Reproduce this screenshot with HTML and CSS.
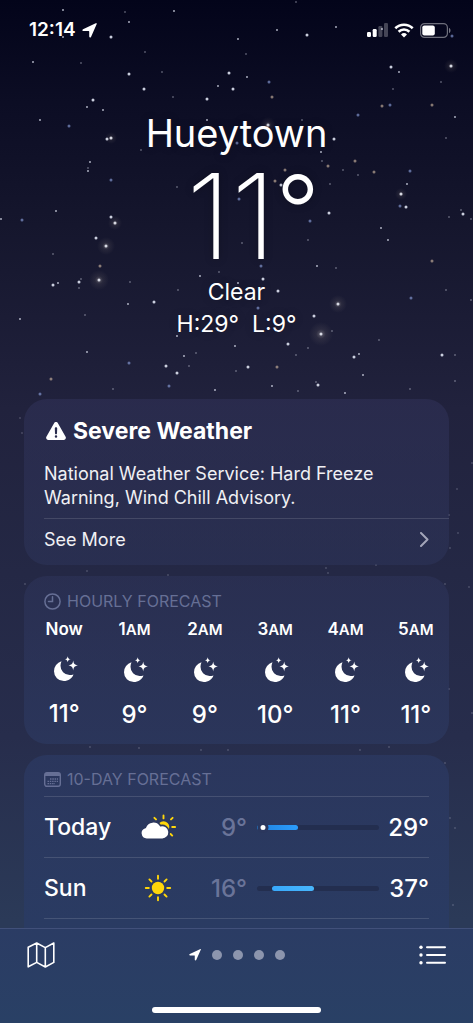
FILE: index.html
```html
<!DOCTYPE html>
<html lang="en">
<head>
<meta charset="utf-8">
<meta name="viewport" content="width=device-width, initial-scale=1">
<title>Weather</title>
<link rel="stylesheet" href="styles.css">
</head>
<body>
<svg class="symbols" aria-hidden="true">
  <symbol id="arrow" viewBox="0 0 16 16"><path d="M15.700 1 9.600 14.800c-.5 1-1.900.8-1.900-.4V9.200c0-.4-.2-.6-.6-.6H1.500C.2 8.600 0 7.200 1.100 6.700L14.600.3c.9-.4 1.400 0 1.100.7z"/></symbol>
  <symbol id="moon" viewBox="0 0 26 26">
    <path d="M8.500 5.200A10.200 10.200 0 0 0 1 15.200a9.800 9.800 0 0 0 9.800 9.800c4.500 0 8.200-2.700 9.700-6.600-1.300.5-2.600.7-4 .7A9.200 9.200 0 0 1 7.500 9.800c0-1.600.4-3.200 1-4.600z"/>
    <path d="M14.700.3c.4 2.100 1 2.600 3 3-2 .4-2.600 1-3 3-.4-2-1-2.600-3-3 2-.4 2.600-.9 3-3zM20.200 4.600c.6 3.500 1.400 4.300 4.800 4.900-3.400.6-4.200 1.400-4.800 4.900-.6-3.500-1.400-4.300-4.800-4.900 3.400-.6 4.200-1.400 4.800-4.900z"/>
  </symbol>
</svg>
<div class="app">
  <svg class="sky" width="473" height="928" aria-hidden="true">
    <defs>
      <radialGradient id="glow"><stop offset="0" stop-color="#fff" stop-opacity=".3"/><stop offset=".4" stop-color="#ffe9c8" stop-opacity=".07"/><stop offset="1" stop-color="#ffe9c8" stop-opacity="0"/></radialGradient>
    </defs>
    <path class="star star-small" d="M125 12h0M145 52h0M81 63h0M162 72h0M173 97h0M246 54h0M296 2h0M393 89h0M441 82h0M141 150h0M88 168h0M53 254h0M81 279h0M79 288h0M130 282h0M85 315h0M113 389h0M196 353h0M189 366h0M178 290h0M177 187h0M219 272h0M236 371h0M446 138h0M302 120h0M322 161h0M343 170h0M358 175h0M330 184h0M461 210h0M449 217h0M471 219h0M308 240h0M242 243h0M336 268h0M332 331h0M446 290h0M471 300h0M379 340h0M308 348h0M296 355h0M455 355h0M316 382h0M298 391h0M410 389h0M455 381h0"/>
    <path class="star star-medium" d="M63 10h0M129 22h0M174 11h0M33 62h0M87 107h0M103 110h0M218 86h0M247 77h0M238 39h0M277 30h0M336 27h0M399 72h0M455 117h0M382 29h0M63 37h0M40 120h0M90 162h0M88 171h0M56 211h0M1 219h0M58 283h0M128 304h0M20 319h0M87 352h0M184 356h0M177 336h0M200 276h0M235 346h0M215 390h0M238 283h0M321 152h0M407 184h0M381 228h0M388 240h0M317 266h0M359 354h0M363 375h0M272 386h0M345 393h0M207 120h0"/>
    <path class="star star-large" d="M111 37h0M129 74h0M144 89h0M93 100h0M207 99h0M229 73h0M233 89h0M307 35h0M391 67h0M451 66h0M107 139h0M111 138h0M111 217h0M115 223h0M96 238h0M106 246h0M99 280h0M53 285h0M79 282h0M154 302h0M166 366h0M177 373h0M268 125h0M334 139h0M281 185h0M401 194h0M406 207h0M329 213h0M463 214h0M263 279h0M278 291h0M314 316h0M338 304h0M321 334h0M288 344h0M354 357h0M442 355h0M248 367h0M318 385h0"/>
    <path class="star star-blue" d="M269 82h0M390 105h0M358 115h0M452 36h0M69 126h0M111 180h0M22 220h0M129 363h0M40 394h0M169 386h0M237 143h0M410 171h0M400 206h0M310 221h0M239 199h0M261 266h0M258 308h0M411 298h0"/>
    <path class="star star-warm" d="M272 97h0M382 106h0M432 105h0M100 266h0M51 379h0M355 161h0M328 166h0M285 170h0M275 181h0M374 172h0M432 261h0M277 367h0"/>
    <path class="star star-faint" d="M20 418h0M22 433h0M472 463h0M457 489h0M449 515h0M458 533h0M450 548h0M326 568h0M376 565h0M328 573h0M87 571h0M25 584h0M445 584h0M469 587h0M168 575h0M90 747h0M139 748h0M201 750h0M228 750h0M360 750h0M389 747h0M449 689h0M450 818h0M455 828h0M445 763h0M472 713h0M453 905h0"/>
    <g fill="url(#glow)"><circle cx="106" cy="246" r="9"/><circle cx="99" cy="280" r="10"/><circle cx="115" cy="223" r="7"/><circle cx="338" cy="304" r="9"/><circle cx="321" cy="334" r="12"/><circle cx="451" cy="66" r="7"/><circle cx="268" cy="125" r="8"/><circle cx="111" cy="138" r="6"/><circle cx="401" cy="194" r="6"/></g>
  </svg>

  <header class="status">
    <div class="status-time"><time>12:14</time><svg class="status-arrow" aria-hidden="true"><use href="#arrow"/></svg></div>
    <div class="status-icons">
      <svg width="21" height="15" viewBox="0 0 21 15" aria-label="Signal"><g fill="#fff"><rect y="9" width="4" height="5" rx="1.200"/><rect x="5.700" y="6" width="4" height="8" rx="1.200"/></g><g fill="#fff" opacity=".25"><rect x="11.400" y="3" width="4" height="11" rx="1.200"/><rect x="17" y="0" width="4" height="14" rx="1.200"/></g></svg>
      <svg width="20" height="15" viewBox="0 0 20 15" aria-label="Wi-Fi"><g fill="none" stroke="#fff" stroke-width="2.600"><path d="M1.300 5.200a12.500 12.500 0 0 1 17.400 0"/><path d="M4.600 8.700a7.800 7.800 0 0 1 10.800 0"/></g><path d="M10 14.600l-3-3.100a4.300 4.300 0 0 1 6 0z" fill="#fff"/></svg>
      <svg width="31" height="15" viewBox="0 0 31 15" aria-label="Battery"><rect x=".6" y=".6" width="26.800" height="13.800" rx="4" fill="none" stroke="#fff" stroke-opacity=".42" stroke-width="1.200"/><rect x="2.300" y="2.500" width="12.500" height="10" rx="2" fill="#fff"/><path d="M29 5c2 .6 2 4.400 0 5z" fill="#fff" opacity=".45"/></svg>
    </div>
  </header>

  <main class="content">
    <section class="hero">
      <h1 class="city">Hueytown</h1>
      <p class="temperature">11<span class="degree">°</span></p>
      <p class="condition">Clear</p>
      <p class="high-low"><span>H:29°</span><span>L:9°</span></p>
    </section>

    <section class="card alert">
      <h2 class="alert-title"><svg class="alert-icon" viewBox="0 0 20 18" aria-hidden="true"><path fill="#fff" fill-rule="evenodd" d="M8.200 1c.8-1.400 2.800-1.400 3.600 0l7.800 13.700c.8 1.500-.2 3.300-1.900 3.300H2.300C.6 18-.4 16.200.4 14.700zM10 5.200c-.8 0-1.300.5-1.200 1.300l.2 5c0 1.100 2 1.100 2 0l.2-5c.1-.8-.4-1.300-1.200-1.300zm0 8a1.200 1.200 0 1 0 0 2.500 1.200 1.200 0 0 0 0-2.500z"/></svg>Severe Weather</h2>
      <p class="alert-text">National Weather Service: Hard Freeze Warning, Wind Chill Advisory.</p>
      <button class="see-more" type="button">See More<svg width="9" height="15" viewBox="0 0 9 15" aria-hidden="true"><path d="M1 1l6.500 6.500L1 14" fill="none" stroke="currentColor" stroke-width="2" stroke-linecap="round" stroke-linejoin="round"/></svg></button>
    </section>

    <section class="card hourly">
      <h2 class="card-label"><svg width="17" height="17" viewBox="0 0 17 17" aria-hidden="true"><g fill="none" stroke="currentColor" stroke-width="1.500" stroke-linecap="round"><circle cx="8.500" cy="8.500" r="7.600"/><path d="M8.500 3.800v4.700H4.500"/></g></svg>HOURLY FORECAST</h2>
      <ol class="hours">
        <li class="hour"><span class="hour-name">Now</span><svg class="moon" aria-hidden="true"><use href="#moon"/></svg><span class="hour-temp">11°</span></li>
        <li class="hour"><span class="hour-name">1<small>AM</small></span><svg class="moon" aria-hidden="true"><use href="#moon"/></svg><span class="hour-temp">9°</span></li>
        <li class="hour"><span class="hour-name">2<small>AM</small></span><svg class="moon" aria-hidden="true"><use href="#moon"/></svg><span class="hour-temp">9°</span></li>
        <li class="hour"><span class="hour-name">3<small>AM</small></span><svg class="moon" aria-hidden="true"><use href="#moon"/></svg><span class="hour-temp">10°</span></li>
        <li class="hour"><span class="hour-name">4<small>AM</small></span><svg class="moon" aria-hidden="true"><use href="#moon"/></svg><span class="hour-temp">11°</span></li>
        <li class="hour"><span class="hour-name">5<small>AM</small></span><svg class="moon" aria-hidden="true"><use href="#moon"/></svg><span class="hour-temp">11°</span></li>
      </ol>
    </section>

    <section class="card daily">
      <h2 class="card-label"><svg width="17" height="15" viewBox="0 0 17 15" aria-hidden="true"><rect x=".7" y=".7" width="15.600" height="13.600" rx="2.200" fill="none" stroke="currentColor" stroke-width="1.400"/><path d="M1 1h15v3H1z" fill="currentColor"/><path d="M6 7h8M3.500 9.300H14M3.500 11.600h7.500" stroke="currentColor" stroke-width="1.300" stroke-dasharray="1.500 .8"/></svg>10-DAY FORECAST</h2>
      <ol class="days">
        <li class="day">
          <span class="day-name">Today</span>
          <svg class="day-icon" viewBox="0 0 36 28" aria-label="Partly cloudy"><circle cx="23.500" cy="14" r="5.800" fill="#ffd60a"/><path d="M23.500 2.400v3M31 6.400l1.600-1.600M32.200 14h3M30.600 21l1.600 1.600M16 6.400l-1.600-1.600" stroke="#ffd60a" stroke-width="1.900" stroke-linecap="round"/><path d="M6.800 26.200a6 6 0 0 1-1.500-11.800A8.600 8.600 0 0 1 20.500 12.600a6.900 6.900 0 1 1 1.800 13.600z" fill="#fff" stroke="#2b375d" stroke-width="1.600"/></svg>
          <span class="low">9°</span>
          <span class="range"><span class="range-fill range-today" style="left:0%;width:34%"></span><span class="range-dot" style="left:5%"></span></span>
          <span class="high">29°</span>
        </li>
        <li class="day">
          <span class="day-name">Sun</span>
          <svg class="day-icon" viewBox="0 0 36 28" aria-label="Sunny"><circle cx="18" cy="14" r="6.200" fill="#ffd60a"/><path d="M18 1.800v3M18 23.200v3M5.800 14h3M27.200 14h3M9.400 5.400l2.100 2.100M24.500 20.500l2.100 2.100M26.600 5.400l-2.100 2.100M11.500 20.500l-2.100 2.100" stroke="#ffd60a" stroke-width="1.900" stroke-linecap="round"/></svg>
          <span class="low">16°</span>
          <span class="range"><span class="range-fill" style="left:12%;width:35%"></span></span>
          <span class="high">37°</span>
        </li>
        <li class="day"></li>
      </ol>
    </section>
  </main>

  <footer class="bottom">
    <nav class="toolbar">
      <button class="tool" type="button" aria-label="Map"><svg width="28" height="26" viewBox="0 0 28 26"><path d="M1.200 5.200L9.700 1l8.600 4.600L26.800 1v19.400l-8.500 4.600-8.600-4.600-8.500 4.400zM9.700 1v19.400M18.300 5.600V25" fill="none" stroke="#fff" stroke-width="1.600" stroke-linejoin="round"/></svg></button>
      <div class="pages"><svg class="page-arrow" aria-label="Current location"><use href="#arrow"/></svg><i class="dot"></i><i class="dot"></i><i class="dot"></i><i class="dot"></i></div>
      <button class="tool" type="button" aria-label="List"><svg width="27" height="20" viewBox="0 0 27 20"><g fill="#fff"><circle cx="2" cy="2.200" r="1.700"/><circle cx="2" cy="10" r="1.700"/><circle cx="2" cy="17.800" r="1.700"/></g><path d="M8 2.200h18M8 10h18M8 17.800h18" stroke="#fff" stroke-width="2" stroke-linecap="round"/></svg></button>
    </nav>
    <div class="home-bar"></div>
  </footer>
</div>
</body>
</html>
```
FILE: styles.css
```css
* { box-sizing: border-box; }

body, h1, h2, p, ol { margin: 0; padding: 0; }

body {
  background: #03041a;
  color: #fff;
  font-family: Inter, "Liberation Sans", sans-serif;
}

ol { list-style: none; }

button {
  padding: 0;
  border: 0;
  background: none;
  color: inherit;
  font: inherit;
}

svg { display: block; flex: none; }

.symbols { position: absolute; width: 0; height: 0; }

.app {
  position: relative;
  display: flex;
  flex-direction: column;
  height: 100vh;
  overflow: hidden;
  background: linear-gradient(#03041a 0%, #0c0d24 10%, #15162d 22%, #21223d 40%, #242845 56%, #272d4c 72%, #2b3a58 90%);
}

.sky { position: absolute; top: 0; left: 0; }

.star { fill: none; stroke: #dfe3f2; stroke-linecap: round; }
.star-small { stroke-width: 2; opacity: .35; }
.star-medium { stroke-width: 2; opacity: .75; }
.star-large { stroke-width: 3; opacity: .9; }
.star-faint { stroke-width: 2; opacity: .2; }
.star-blue { stroke: #93a9e6; stroke-width: 3; opacity: .6; }
.star-warm { stroke: #d8bfa6; stroke-width: 3; opacity: .6; }

.status {
  position: relative;
  display: flex;
  align-items: center;
  justify-content: space-between;
  padding: 20px 22px 0 29px;
}

.status-time {
  display: flex;
  align-items: center;
  gap: 6px;
  font-size: 19px;
  font-weight: 600;
  line-height: 20px;
}

.status-arrow { width: 15px; height: 15px; fill: #fff; }
.status-icons { display: flex; align-items: center; gap: 6px; }

.content {
  position: relative;
  display: flex;
  flex: 1;
  flex-direction: column;
  gap: 11px;
  min-height: 0;
  padding: 68px 24px 0;
  overflow: hidden;
}

.hero {
  flex: none;
  height: 280px;
  text-align: center;
  text-shadow: 0 0 8px rgba(0, 0, 0, .25);
}

.city { font-size: 38px; font-weight: 400; line-height: 50px; }

.temperature {
  height: 118px;
  padding-left: 33px;
  font-size: 118px;
  font-weight: 200;
  line-height: 116px;
}

.degree {
  font-size: 96px;
  font-weight: 300;
  line-height: 1px;
  vertical-align: 14px;
}

.condition { font-size: 23px; line-height: 32px; }

.high-low {
  display: flex;
  justify-content: center;
  gap: 13px;
  font-size: 23px;
  line-height: 32px;
}

.card {
  flex: none;
  border-radius: 23px;
}

.alert {
  padding: 20px 0 0 20px;
  background: linear-gradient(rgba(50, 52, 92, .5), rgba(46, 54, 92, .5));
}

.alert-title {
  display: flex;
  align-items: center;
  gap: 7px;
  padding-left: 2px;
  font-size: 23px;
  font-weight: 700;
  line-height: 24px;
}

.alert-icon { width: 20px; height: 18px; }

.alert-text {
  padding: 19px 60px 8px 0;
  font-size: 18px;
  line-height: 24px;
}

.see-more {
  display: flex;
  align-items: center;
  justify-content: space-between;
  width: 100%;
  height: 47px;
  padding: 0 20px 5px 0;
  border-top: 1px solid rgba(255, 255, 255, .13);
  font-size: 18px;
}

.alert-text, .see-more { color: #f0f0f4; }
.see-more svg { color: #a3a5b9; }

.card-label {
  display: flex;
  align-items: center;
  gap: 6px;
  color: #666f95;
  font-size: 16px;
  font-weight: 400;
  line-height: 18px;
}

.hourly {
  height: 168px;
  padding: 16px 0 0 5px;
  background: linear-gradient(rgba(47, 53, 92, .5), rgba(45, 59, 100, .6));
}

.hourly .card-label { padding-left: 15px; }

.hours { display: grid; grid-template-columns: repeat(6, 1fr); margin-right: -2px; }

.hour {
  display: flex;
  flex-direction: column;
  align-items: center;
}

.hour-name {
  padding-top: 8px;
  font-size: 17px;
  font-weight: 600;
  line-height: 22px;
}

.hour-name small { font-size: 15px; }
.moon { width: 26px; height: 26px; margin: 16px 0 18px 3px; fill: #fff; }
.hour-temp { font-size: 24px; font-weight: 500; line-height: 28px; }

.daily { padding: 15px 20px 0; background: linear-gradient(rgba(44, 57, 98, .75), rgba(41, 60, 102, .8)); }
.daily .card-label { padding-bottom: 8px; }

.day {
  display: grid;
  grid-template-columns: 96px 36px 1fr 122px 50px;
  align-items: center;
  height: 61px;
  border-top: 1px solid rgba(255, 255, 255, .13);
  font-size: 24px;
  font-weight: 500;
}

.day-name { font-size: 23px; }
.day-icon { width: 36px; height: 28px; }
.low { padding-right: 10px; color: #6a7499; text-align: right; }
.high { text-align: right; }

.range {
  position: relative;
  height: 5px;
  border-radius: 3px;
  background: #232e4f;
}

.range-fill {
  position: absolute;
  top: 0;
  bottom: 0;
  border-radius: 3px;
  background: linear-gradient(90deg, #38a9fc, #48b6fb);
}

.range-today { background: linear-gradient(90deg, #2182dd, #2b9cfb); }

.range-dot {
  position: absolute;
  top: -3px;
  width: 11px;
  height: 11px;
  border: 3px solid #2b375d;
  border-radius: 50%;
  background: #fff;
  transform: translateX(-50%);
}

.bottom {
  position: relative;
  flex: none;
  border-top: 1px solid #41507a;
  background: linear-gradient(#2b3c64, #294065);
}

.toolbar {
  display: flex;
  align-items: center;
  justify-content: space-between;
  height: 52px;
  padding: 0 27px;
}

.pages { display: flex; align-items: center; gap: 11px; }
.page-arrow { width: 12px; height: 12px; fill: #fff; }
.dot { width: 10px; height: 10px; border-radius: 50%; background: #8c95ad; }

.home-bar {
  width: 169px;
  height: 6px;
  margin: 26px auto 10px;
  border-radius: 3px;
  background: #fff;
}
```
